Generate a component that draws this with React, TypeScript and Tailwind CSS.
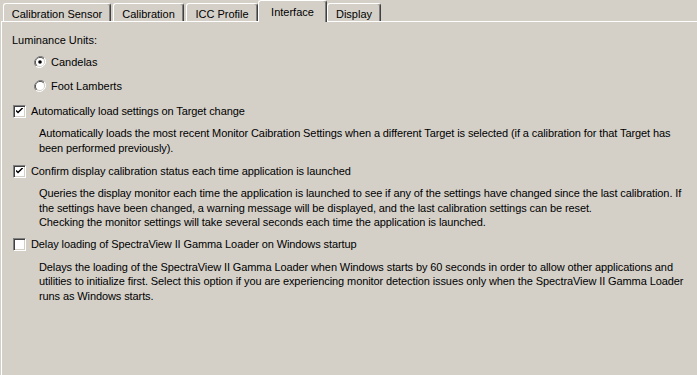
import React from "react";

const font = { fontFamily: '"Liberation Sans", Arial, sans-serif' };

function Tab({ label, w, selected }: { label: string; w: string; selected?: boolean }) {
  if (selected) {
    return (
      <div
        className={`${w} h-[22px] -mx-[2px] relative z-10 -mb-px bg-[#d4d0c8] border-l border-t border-white border-r border-r-[#404040] rounded-t-[3px] shadow-[inset_-1px_0_0_#808080] flex items-start justify-center pt-[3px] text-[11px] text-black`}
      >
        {label}
      </div>
    );
  }
  return (
    <div
      className={`${w} h-[18px] bg-[#d4d0c8] border-l border-t border-white border-r border-r-[#404040] rounded-t-[3px] shadow-[inset_-1px_0_0_#808080] flex items-start justify-center pt-[2px] text-[11px] text-black`}
    >
      {label}
    </div>
  );
}

function Checkbox({ checked }: { checked?: boolean }) {
  return (
    <div className="w-[13px] h-[13px] shrink-0 bg-white border-t border-l border-t-[#808080] border-l-[#808080] border-b border-r border-b-white border-r-white shadow-[inset_1px_1px_0_#404040,inset_-1px_-1px_0_#d4d0c8] flex items-center justify-center">
      {checked && (
        <svg width="7" height="7" viewBox="0 0 7 7" className="block">
          <path d="M0 2.5 L2 4.5 L7 -0.5" stroke="#000" strokeWidth="1.4" fill="none" />
        </svg>
      )}
    </div>
  );
}

function Radio({ checked }: { checked?: boolean }) {
  return (
    <svg width="12" height="12" viewBox="0 0 12 12" className="shrink-0 block">
      <path d="M10.2 1.8 A6 6 0 0 0 1.8 10.2" stroke="#808080" strokeWidth="1" fill="none" />
      <path d="M9.5 2.5 A5 5 0 0 0 2.5 9.5" stroke="#404040" strokeWidth="1" fill="none" />
      <circle cx="6" cy="6" r="4" fill="#fff" />
      <path d="M1.8 10.2 A6 6 0 0 0 10.2 1.8" stroke="#fff" strokeWidth="1" fill="none" />
      {checked && <circle cx="6" cy="6" r="1.8" fill="#000" />}
    </svg>
  );
}

function Desc({ lines }: { lines: string[] }) {
  return (
    <div className="pl-[37px] pt-[8px] text-[11px] leading-[14.5px] text-black tracking-[-0.1px]">
      {lines.map((l, i) => (
        <div key={i} className="whitespace-nowrap">
          {l}
        </div>
      ))}
    </div>
  );
}

export default function App() {
  return (
    <div className="w-[697px] h-[375px] bg-[#d4d0c8] overflow-hidden select-none" style={font}>
      <div className="flex items-end h-[21px] pl-[3px] gap-[2px] pt-0">
        <Tab label="Calibration Sensor" w="w-[108px]" />
        <Tab label="Calibration" w="w-[71px]" />
        <Tab label="ICC Profile" w="w-[72px]" />
        <Tab label="Interface" w="w-[69px]" selected />
        <Tab label="Display" w="w-[54px]" />
      </div>
      <div className="ml-[1px] h-[360px] border-t border-l border-white text-[11px] text-black">
        <div className="pl-[10px] pt-[11px] leading-[14px]">Luminance Units:</div>
        <div className="flex items-center gap-[5px] pl-[32px] mt-[8px] h-[14px]">
          <Radio checked />
          <span>Candelas</span>
        </div>
        <div className="flex items-center gap-[5px] pl-[32px] mt-[10px] h-[14px]">
          <Radio />
          <span>Foot Lamberts</span>
        </div>
        <div className="flex items-center gap-[5px] pl-[11px] mt-[11px] h-[14px] tracking-[-0.1px]">
          <Checkbox checked />
          <span>Automatically load settings on Target change</span>
        </div>
        <Desc
          lines={[
            "Automatically loads the most recent Monitor Caibration Settings when a different Target is selected (if a calibration for that Target has",
            "been performed previously).",
          ]}
        />
        <div className="flex items-center gap-[5px] pl-[11px] mt-[9px] h-[14px] tracking-[-0.1px]">
          <Checkbox checked />
          <span>Confirm display calibration status each time application is launched</span>
        </div>
        <Desc
          lines={[
            "Queries the display monitor each time the application is launched to see if any of the settings have changed since the last calibration. If",
            "the settings have been changed, a warning message will be displayed, and the last calibration settings can be reset.",
            "Checking the monitor settings will take several seconds each time the application is launched.",
          ]}
        />
        <div className="flex items-center gap-[5px] pl-[11px] mt-[8px] h-[14px] tracking-[-0.1px]">
          <Checkbox />
          <span>Delay loading of SpectraView II Gamma Loader on Windows startup</span>
        </div>
        <Desc
          lines={[
            "Delays the loading of the SpectraView II Gamma Loader when Windows starts by 60 seconds in order to allow other applications and",
            "utilities to initialize first. Select this option if you are experiencing monitor detection issues only when the SpectraView II Gamma Loader",
            "runs as Windows starts.",
          ]}
        />
      </div>
    </div>
  );
}
